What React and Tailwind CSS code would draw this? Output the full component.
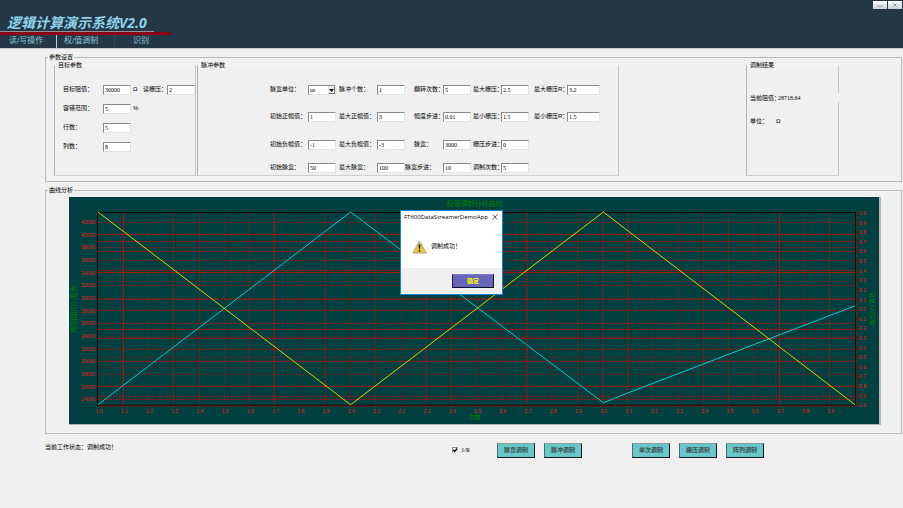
import { useState } from "react";

const targetFields = [
    { id: "resistance", label: "目标阻值：", value: "30000", unit: "Ω" },
    { id: "tolerance", label: "容错范围：", value: "5", unit: "%" },
    { id: "rows", label: "行数：", value: "5" },
    { id: "cols", label: "列数：", value: "8" },
];

// laid out row by row, null leaves the cell empty
const pulseRows = [
    [
        { label: "脉宽单位：", options: ["us", "ns", "ms"] },
        { label: "脉冲个数：", value: "1" },
        { label: "翻转次数：", value: "5" },
        { label: "最大栅压：", value: "2.5" },
        { label: "最大栅压R：", value: "3.2" },
    ],
    [
        { label: "初始正幅值：", value: "1" },
        { label: "最大正幅值：", value: "3" },
        { label: "幅度步进：", value: "0.01" },
        { label: "最小栅压：", value: "1.5" },
        { label: "最小栅压R：", value: "1.5" },
    ],
    [
        { label: "初始负幅值：", value: "-1" },
        { label: "最大负幅值：", value: "-3" },
        { label: "脉宽：", value: "3000" },
        { label: "栅压步进：", value: "0" },
        null,
    ],
    [
        { label: "初始脉宽：", value: "50" },
        { label: "最大脉宽：", value: "100" },
        { label: "脉宽步进：", value: "10", wide: true },
        { label: "调制次数：", value: "5" },
        null,
    ],
];

// [y, opacity]
const hLines = [
    [25, 0.5], [37, 1], [44, 0.8], [50, 0.5], [54, 0.8], [63, 0.5], [73, 0.7], [75, 1],
    [84, 0.3], [88, 0.6], [101, 0.4], [102, 0.8], [113, 0.7], [126, 0.7], [132, 1], [139, 0.4],
    [141, 0.9], [152, 0.7], [160, 0.4], [164, 0.9], [170, 0.3], [177, 0.5], [189, 1], [199, 0.7], [202, 0.8],
];

const vOpacity = [1, 0.2, 0.6, 0.6, 0.3, 0.5, 1, 0.2, 0.6, 0.4, 0.6, 0.3, 0.6, 0.6, 0.4, 0.3, 1, 0.3, 0.6, 0.6, 0.8, 0.2, 0.3, 0.6, 0.5, 0.3, 1, 0.3, 0.6];

const LEFT = 29;
const RIGHT = 787;
const TOP = 15;
const BOTTOM = 209;
const X_STEP = (RIGHT - LEFT) / 30;

const inputClass =
    "block h-[10px] min-w-0 border border-t-[#8a8a8a] border-l-[#8a8a8a] border-r-[#e3e3e3] border-b-[#e3e3e3] bg-white pl-px font-['Liberation_Serif',serif] text-[6px] leading-[8px] text-black outline-none";

function Group({ title, className = "", bodyClass, inner, children }) {
    return (
        <fieldset
            className={`min-w-0 border ${inner
                ? "border-t-[#f8f8f8] border-l-[#b4b4b4] border-r-[#c4c4c4] border-b-[#cfcfcf]"
                : "border-[#b8b8b8]"} ${className}`}
        >
            <legend className="ml-[2px] px-px leading-[8px]">{title}</legend>
            <div className={bodyClass}>{children}</div>
        </fieldset>
    );
}

function PulseField({ id, field, last, indent }) {
    return (
        <>
            <label htmlFor={id} className={`whitespace-nowrap leading-[8px] ${indent ? "pl-[9px]" : ""}`}>
                {field.label}
            </label>
            {field.options ? (
                <div className="relative w-[28px]">
                    <select id={id} className={`${inputClass} w-full appearance-none`}>
                        {field.options.map(o => <option key={o}>{o}</option>)}
                    </select>
                    <span className="pointer-events-none absolute top-px right-px flex h-2 w-[7px] items-center justify-center border border-t-[#e3e3e3] border-l-[#e3e3e3] border-r-[#777] border-b-[#777] bg-[#f0f0f0]">
                        <svg viewBox="0 0 5 3" className="w-[5px] shrink-0"><path d="M0 0h5L2.5 3z" fill="#000" /></svg>
                    </span>
                </div>
            ) : (
                <input id={id} defaultValue={field.value} className={`${inputClass} ${last ? "w-[33px]" : "w-[28px]"}`} />
            )}
        </>
    );
}

function CurveChart() {
    const leftTicks = Array.from({ length: 15 }, (_, i) => 42000 - i * 2000);
    const rightTicks = Array.from({ length: 21 }, (_, i) => (1 - i * 0.1).toFixed(1));
    return (
        <svg
            viewBox="0 0 811 227"
            role="img"
            aria-label="权值调制分析曲线"
            className="block h-auto w-full border-r-2 border-b border-[#b5b5b5] bg-[#004040]"
        >
            <g stroke="#f80000" strokeWidth="1" strokeDasharray="2 1">
                {hLines.map(([y, o]) => (
                    <line key={y} x1={LEFT} x2={RIGHT} y1={y + 0.5} y2={y + 0.5} opacity={o} />
                ))}
                {vOpacity.map((o, i) => {
                    const x = Math.floor(LEFT + (i + 1) * X_STEP) + 0.5;
                    return <line key={i} x1={x} x2={x} y1={TOP} y2={BOTTOM} opacity={o} />;
                })}
            </g>

            {/* AXES */}
            <rect x="28.5" y="15.5" width="759" height="193" fill="none" stroke="#1c0808" />
            <path d="M28 209.5H788M788.5 15V210" stroke="#6b1a1a" fill="none" />

            {/* CURVES */}
            <polyline points="29,208 282,15 535,206 560,196 787,109" fill="none" stroke="#00dcdc" strokeWidth="0.9" />
            <polyline points="29,15 282,208 535,15 787,208" fill="none" stroke="#e6e600" strokeWidth="0.9" />

            {/* TICK LABELS */}
            <g fill="#f01c1c" className="font-['Liberation_Sans',sans-serif] text-[5px]">
                {leftTicks.map((v, i) => (
                    <text key={v} x="26" y={27 + i * 12.68} textAnchor="end">{v}</text>
                ))}
                {rightTicks.map((v, i) => (
                    <text key={i} x="798" y={18 + i * 9.63} textAnchor="end">{v}</text>
                ))}
                {Array.from({ length: 30 }, (_, i) => (
                    <text key={i} x={LEFT + 1 + i * X_STEP} y="216" textAnchor="middle">{(1 + i * 0.1).toFixed(1)}</text>
                ))}
            </g>

            {/* TITLES */}
            <g fill="#008000" textAnchor="middle">
                <text x="406" y="9" className="text-[7px]">权值调制分析曲线</text>
                <text x="406" y="222" className="text-[6px]">次数</text>
                <text transform="translate(7 112) rotate(-90)" className="text-[7px]">电阻值(Ω)-蓝色</text>
                <text transform="translate(806 112) rotate(-90)" className="text-[6px]">电压(V)-黄色</text>
            </g>
        </svg>
    );
}

function MessageBox({ onClose }) {
    return (
        <div className="fixed inset-0 flex items-center justify-center pb-1">
            <div role="dialog" aria-label="FT600DataStreamerDemoApp" className="w-[103px] border border-[#1883d7] bg-white">
                <div className="flex h-[13px] items-center justify-between pr-1 pl-[3px]">
                    <span className="font-['Open_Sans',sans-serif] text-[6px] leading-[8px]">FT600DataStreamerDemoApp</span>
                    <button type="button" aria-label="关闭" onClick={onClose}>
                        <svg viewBox="0 0 6 6" className="block size-[6px]"><path d="M.5.5l5 5M5.5.5l-5 5" stroke="#222" strokeWidth=".7" /></svg>
                    </button>
                </div>
                <div className="flex h-[44px] items-center gap-1 pl-[11px]">
                    <svg viewBox="0 0 15 14" className="mt-[3px] h-[14px] w-[15px]">
                        <path d="M7.5 1L14.3 13H.7z" fill="#f6c52b" stroke="#a9a9a0" strokeWidth="1" strokeLinejoin="round" />
                        <path d="M6.5 4.4h2L8 9.4H7z" fill="#222" />
                        <circle cx="7.5" cy="11" r=".9" fill="#222" />
                    </svg>
                    <span className="text-[6px] leading-[8px]">调制成功！</span>
                </div>
                <div className="flex h-[26px] items-center justify-end bg-[#f0f0f0] pr-2">
                    <button
                        type="button"
                        onClick={onClose}
                        className="h-[14px] w-[42px] border border-t-[#7a7ac8] border-l-[#202050] border-r-[#101030] border-b-[#101030] bg-[#6666bb] text-[6px] leading-[8px] font-bold text-[#ffff00]"
                    >
                        确定
                    </button>
                </div>
            </div>
        </div>
    );
}

function ActionButton({ children }) {
    return (
        <button
            type="button"
            className="h-[15px] w-[38px] border border-t-[#8f9c9c] border-l-[#4b6a6a] border-r-[#101818] border-b-[#101818] bg-[#66c8c8] leading-[8px] font-bold text-[#3f5050]"
        >
            {children}
        </button>
    );
}

export default function App() {
    const [showMessage, setShowMessage] = useState(true);
    const [inverse, setInverse] = useState(true);

    return (
        <div className="min-h-screen bg-[#f0f0f0] font-['Liberation_Sans','Noto_Sans_CJK_SC',sans-serif] text-[6px] leading-[8px] text-black">

            {/* HEADER */}
            <header className="flex items-start justify-between border-b border-[#c3c8d0] bg-[#243746]">
                <div>
                    <h1 className="w-[154px] border-b border-[#8b949c] pt-[14px] pl-[7px] font-['Open_Sans','Noto_Sans_CJK_SC',sans-serif] text-[14px] leading-[17px] font-bold whitespace-nowrap text-[#8fd3ea] italic">
                        逻辑计算演示系统V2.0
                    </h1>
                    <div className="h-[3px] w-[171px] bg-[#8c0014]" />
                    <nav className="flex h-[13px] text-[8px] leading-[12px] text-[#8cc4d6]">
                        <a href="#rw" className="w-[57px] border-r border-[#c4ccd2] pl-[9px]">读/写操作</a>
                        <a href="#weight" className="w-[58px] border-r border-[#31485a] pl-[7px]">权/值调制</a>
                        <a href="#identify" className="w-[57px] pl-[18px]">识别</a>
                    </nav>
                </div>
                <div className="flex gap-px pt-px pr-px">
                    <button type="button" aria-label="最小化" className="flex h-2 w-[14px] items-center justify-center bg-linear-to-b from-white to-[#c9ced6]">
                        <svg viewBox="0 0 6 4" className="h-1 w-[6px]"><path d="M.5 3h5" stroke="#7f8fb5" /></svg>
                    </button>
                    <button type="button" aria-label="退出" className="flex h-2 w-[14px] items-center justify-center bg-linear-to-b from-white to-[#c9ced6]">
                        <svg viewBox="0 0 4 4" className="size-1"><path d="M.5.5l3 3M3.5.5l-3 3" stroke="#7f8fb5" /></svg>
                    </button>
                </div>
            </header>

            <main className="pt-1 pr-px pl-[45px]">

                {/* PARAMETERS */}
                <Group title="参数设置" bodyClass="grid grid-cols-[142fr_423fr_127fr_93fr_62fr] pb-[5px] pl-2">
                    <Group title="目标参数" inner className="h-[115px]" bodyClass="flex flex-col gap-[9px] pt-4 pl-2">
                        {targetFields.map((f, i) => (
                            <div key={f.id} className="flex items-start">
                                <label htmlFor={f.id} className="w-[40px] shrink-0 leading-[8px]">{f.label}</label>
                                <input id={f.id} defaultValue={f.value} className={`${inputClass} w-[28px] shrink-0`} />
                                <span className="w-[12px] shrink-0 pl-[2px] leading-[8px]">{f.unit}</span>
                                {i === 0 && (
                                    <>
                                        <label htmlFor="read-gate" className="w-[24px] shrink-0 leading-[8px] whitespace-nowrap">读栅压：</label>
                                        <input id="read-gate" defaultValue="2" className={`${inputClass} flex-1`} />
                                    </>
                                )}
                            </div>
                        ))}
                    </Group>

                    <Group
                        title="脉冲参数"
                        inner
                        className="ml-px h-[115px]"
                        bodyClass="grid grid-cols-[38px_31px_38px_28px_38px_30px_28px_33px_33px_33px] grid-rows-[27px_28px_23px_10px] items-start pt-4 pl-[72px]"
                    >
                        {pulseRows.map((row, r) =>
                            row.map((field, c) => field ? (
                                <PulseField
                                    key={`${r}-${c}`}
                                    id={`pulse-${r}-${c}`}
                                    field={field}
                                    last={c === 4}
                                    indent={c === 2 && !field.wide}
                                />
                            ) : (
                                <span key={`${r}-${c}`} className="col-span-2" />
                            ))
                        )}
                    </Group>

                    <Group title="调制结果" inner className="col-start-4 h-[115px]" bodyClass="pt-6 pl-[3px]">
                        {/* the readout strip runs over the right border */}
                        <div className="-mr-px flex h-[9px] items-center bg-[#f0f0f0]">
                            <span className="w-[28px] whitespace-nowrap">当前阻值：</span>
                            <output className="font-['Liberation_Serif',serif]">28718.64</output>
                        </div>
                        <div className="mt-[14px] flex h-[9px] items-center">
                            <span className="w-[26px]">单位：</span>
                            <output>Ω</output>
                        </div>
                    </Group>
                </Group>

                {/* CURVES */}
                <Group title="曲线分析" className="mt-1" bodyClass="pt-[3px] pr-[20px] pb-2 pl-[23px]">
                    <CurveChart />
                </Group>

                {/* STATUS AND ACTIONS */}
                <div className="flex items-start pt-[9px] pr-[138px]">
                    <p className="flex-1 leading-[8px]">当前工作状态：调制成功！</p>
                    <label className="mr-[27px] flex h-[15px] items-center gap-[3px] font-['Liberation_Serif',serif]">
                        <span className="relative block size-[6px]">
                            <input
                                type="checkbox"
                                checked={inverse}
                                onChange={e => setInverse(e.target.checked)}
                                className="block size-[6px] appearance-none border border-t-[#8a8a8a] border-l-[#8a8a8a] border-r-[#e3e3e3] border-b-[#e3e3e3] bg-white"
                            />
                            {inverse && (
                                <svg viewBox="0 0 6 6" className="pointer-events-none absolute inset-0 size-[6px]">
                                    <path d="M1.3 2.8l1.4 1.6L5.2 1.5" fill="none" stroke="#000" strokeWidth="1.4" />
                                </svg>
                            )}
                        </span>
                        1/R
                    </label>
                    <div className="mr-[50px] flex gap-[9px]">
                        <ActionButton>脉宽调制</ActionButton>
                        <ActionButton>脉冲调制</ActionButton>
                    </div>
                    <div className="flex gap-[9px]">
                        <ActionButton>单次调制</ActionButton>
                        <ActionButton>栅压调制</ActionButton>
                        <ActionButton>阵列调制</ActionButton>
                    </div>
                </div>
            </main>

            {showMessage && <MessageBox onClose={() => setShowMessage(false)} />}
        </div>
    );
}
